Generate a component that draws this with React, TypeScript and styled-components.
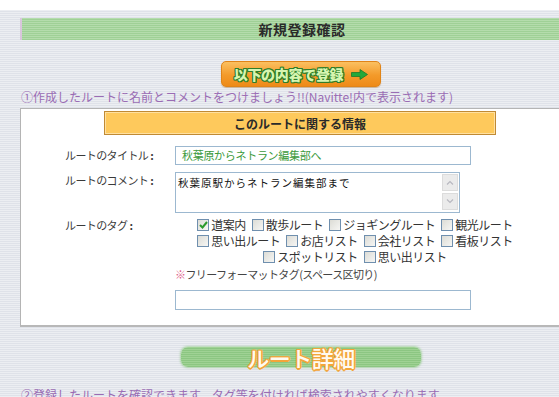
import styled, { createGlobalStyle } from 'styled-components';

const GlobalStyle = createGlobalStyle`
  html, body {
    margin: 0;
    padding: 0;
    overflow: hidden;
    background: #fff;
  }
  body {
    font-family: "Noto Sans CJK JP", "Noto Sans", sans-serif;
    color: #333;
  }
`;

const TopBand = styled.div`
  height: 10px;
  background: #fff;
`;

const Stage = styled.div`
  width: 562px;
  padding: 8px 0 0 20px;
  height: 400px;
  background: repeating-linear-gradient(
    to bottom,
    #eceef2 0px,
    #eceef2 1px,
    #dfe2e9 1px,
    #dfe2e9 2px
  );
`;

const HeaderBar = styled.div`
  height: 22px;
  display: flex;
  align-items: center;
  justify-content: center;
  font-size: 14px;
  font-weight: 700;
  color: #2a2a2a;
  letter-spacing: 0.5px;
  background: repeating-linear-gradient(
    to bottom,
    #b4dcac 0px,
    #b4dcac 1px,
    #9fd096 1px,
    #9fd096 2px
  );
  border-left: 2px solid #d9c6dc;
`;

const ButtonRow = styled.div`
  display: flex;
  justify-content: center;
  margin-top: 21px;
`;

const RegisterButton = styled.div`
  width: 158px;
  height: 24px;
  border-radius: 5px;
  border: 1px solid #e08418;
  background: linear-gradient(to bottom, #fbc060 0%, #f39a2a 55%, #ee8a18 100%);
  display: flex;
  align-items: center;
  justify-content: center;
  gap: 8px;
  box-shadow: 0 1px 1px rgba(160, 90, 0, 0.35);
`;

const ButtonLabel = styled.span`
  font-size: 14px;
  font-weight: 900;
  color: #d6f5b0;
  letter-spacing: -0.3px;
  text-shadow:
    1px 0 0 #2f7d2a, -1px 0 0 #2f7d2a, 0 1px 0 #2f7d2a, 0 -1px 0 #2f7d2a,
    1px 1px 0 #2f7d2a, -1px -1px 0 #2f7d2a, 1px -1px 0 #2f7d2a, -1px 1px 0 #2f7d2a;
`;

const Note = styled.div<{ $top?: number }>`
  margin-top: ${({ $top }) => $top ?? 3}px;
  font-size: 12px;
  line-height: 14px;
  color: #9a6cb4;
  white-space: nowrap;
  padding-left: 1px;
`;

const Panel = styled.div`
  margin-top: 4px;
  background: #fff;
  border: 1px solid #b4b4b4;
  border-right: none;
  border-bottom: 2px solid #b8b8b8;
  padding: 2px 0 15px 0;
`;

const InfoHeader = styled.div`
  width: 390px;
  height: 22px;
  margin-left: 83px;
  background: #fec95c;
  border: 1px solid #c08a34;
  box-shadow: inset 0 0 0 1px #ffe0a0;
  display: flex;
  align-items: center;
  justify-content: center;
  font-size: 12px;
  font-weight: 700;
  color: #2a2a2a;
`;

const FormGrid = styled.div`
  display: grid;
  grid-template-columns: 154px 360px;
  row-gap: 7px;
  margin-top: 11px;
`;

const Label = styled.div<{ $shift?: number }>`
  padding-left: 44px;
  margin-top: ${({ $shift }) => $shift ?? 0}px;
  font-size: 11px;
  line-height: 16px;
  letter-spacing: -0.6px;
  color: #3a3a3a;
  white-space: nowrap;
`;

const Colon = styled.span`
  font-weight: 700;
  margin-left: 2px;
`;

const TextBox = styled.div<{ $green?: boolean }>`
  width: 288px;
  height: 17px;
  border: 1px solid #9cb8d0;
  box-sizing: content-box;
  font-size: 11px;
  line-height: 17px;
  padding-left: 6px;
  color: ${({ $green }) => ($green ? '#3c9a3c' : '#222')};
  letter-spacing: -0.3px;
  white-space: nowrap;
`;

const TextArea = styled.div`
  width: 283px;
  height: 39px;
  border: 1px solid #9cb8d0;
  display: flex;
`;

const AreaText = styled.div`
  flex: 1;
  font-size: 10.5px;
  line-height: 14px;
  letter-spacing: 1px;
  color: #111;
  padding: 3px 0 0 2px;
  white-space: nowrap;
`;

const ScrollBar = styled.div`
  width: 16px;
  display: flex;
  flex-direction: column;
  justify-content: space-between;
  padding: 1px 1px 2px 0;
`;

const ScrollBtn = styled.div`
  height: 15px;
  background: #ebebeb;
  border: 1px solid #dcdcdc;
  display: flex;
  align-items: center;
  justify-content: center;
`;

const TagField = styled.div`
  margin-top: -3px;
`;

const TagCell = styled.div`
  text-align: center;
  font-size: 12px;
  line-height: 16px;
  letter-spacing: -0.5px;
  color: #333;
`;

const TagLine = styled.div`
  white-space: nowrap;
  height: 16px;
`;

const Tag = styled.span`
  display: inline-flex;
  align-items: center;
  vertical-align: top;
  height: 16px;
  margin: 0 3px;
`;

const Box = styled.span`
  width: 10px;
  height: 10px;
  border: 1px solid #6f8fae;
  background: linear-gradient(135deg, #dcdcd6 0%, #f6f6f4 100%);
  margin-right: 2px;
  display: inline-flex;
  align-items: center;
  justify-content: center;
`;

const FreeNote = styled.div`
  margin-top: 2px;
  font-size: 11px;
  line-height: 14px;
  letter-spacing: -0.6px;
  color: #444;
  white-space: nowrap;
`;

const Mark = styled.span`
  color: #e0608a;
`;

const FreeInput = styled(TextBox)`
  margin-top: 9px;
  height: 18px;
`;

const DetailRow = styled.div`
  display: flex;
  justify-content: center;
  margin-top: 20px;
`;

const DetailBar = styled.div`
  width: 240px;
  height: 20px;
  border-radius: 7px;
  background: repeating-linear-gradient(
    to bottom,
    #9fd294 0px,
    #9fd294 1px,
    #8cc682 1px,
    #8cc682 2px
  );
  box-shadow: 0 0 2px 1px rgba(140, 200, 130, 0.6);
  display: flex;
  align-items: center;
  justify-content: center;
`;

const DetailTitle = styled.span`
  font-size: 22px;
  font-weight: 500;
  line-height: 20px;
  color: #fffaf0;
  letter-spacing: -0.5px;
  text-shadow:
    1.5px 0 0 #f3a53a, -1.5px 0 0 #f3a53a, 0 1.5px 0 #f3a53a, 0 -1.5px 0 #f3a53a,
    1px 1px 0 #f3a53a, -1px -1px 0 #f3a53a, 1px -1px 0 #f3a53a, -1px 1px 0 #f3a53a;
`;

const tagRows = [
  [
    { name: '道案内', checked: true },
    { name: '散歩ルート' },
    { name: 'ジョギングルート' },
    { name: '観光ルート' },
  ],
  [{ name: '思い出ルート' }, { name: 'お店リスト' }, { name: '会社リスト' }, { name: '看板リスト' }],
  [{ name: 'スポットリスト' }, { name: '思い出リスト' }],
];

const Arrow = () => (
  <svg width="17" height="11" viewBox="0 0 17 11">
    <path d="M0.5 3.5 H9 V0.5 L16.5 5.5 L9 10.5 V7.5 H0.5 Z" fill="#22a83a" stroke="#1c7a2a" strokeWidth="0.8" />
  </svg>
);

const Chevron = ({ up }: { up?: boolean }) => (
  <svg width="8" height="5" viewBox="0 0 8 5">
    <path d={up ? 'M1 4.5 L4 1.5 L7 4.5' : 'M1 0.5 L4 3.5 L7 0.5'} fill="none" stroke="#b8b8c0" strokeWidth="1.2" />
  </svg>
);

const Check = () => (
  <svg width="9" height="8" viewBox="0 0 9 8">
    <path d="M1 4 L3.5 6.5 L8 1" fill="none" stroke="#2c9a2c" strokeWidth="2" />
  </svg>
);

export default function App() {
  return (
    <>
      <GlobalStyle />
      <TopBand />
      <Stage>
        <HeaderBar>新規登録確認</HeaderBar>
        <ButtonRow>
          <RegisterButton>
            <ButtonLabel>以下の内容で登録</ButtonLabel>
            <Arrow />
          </RegisterButton>
        </ButtonRow>
        <Note>①作成したルートに名前とコメントをつけましょう!!(Navitte!内で表示されます)</Note>
        <Panel>
          <InfoHeader>このルートに関する情報</InfoHeader>
          <FormGrid>
            <Label $shift={1}>
              ルートのタイトル<Colon>:</Colon>
            </Label>
            <TextBox $green>秋葉原からネトラン編集部へ</TextBox>

            <Label>
              ルートのコメント<Colon>:</Colon>
            </Label>
            <TextArea>
              <AreaText>秋葉原駅からネトラン編集部まで</AreaText>
              <ScrollBar>
                <ScrollBtn>
                  <Chevron up />
                </ScrollBtn>
                <ScrollBtn>
                  <Chevron />
                </ScrollBtn>
              </ScrollBar>
            </TextArea>

            <Label $shift={-3}>
              ルートのタグ<Colon>:</Colon>
            </Label>
            <TagField>
              <TagCell>
                {tagRows.map((row, i) => (
                  <TagLine key={i}>
                    {row.map((t) => (
                      <Tag key={t.name}>
                        <Box>{t.checked && <Check />}</Box>
                        {t.name}
                      </Tag>
                    ))}
                  </TagLine>
                ))}
              </TagCell>
              <FreeNote>
                <Mark>※</Mark>フリーフォーマットタグ(スペース区切り)
              </FreeNote>
              <FreeInput />
            </TagField>
          </FormGrid>
        </Panel>
        <DetailRow>
          <DetailBar>
            <DetailTitle>ルート詳細</DetailTitle>
          </DetailBar>
        </DetailRow>
        <Note $top={21}>②登録したルートを確認できます。タグ等を付ければ検索されやすくなります</Note>
      </Stage>
    </>
  );
}
